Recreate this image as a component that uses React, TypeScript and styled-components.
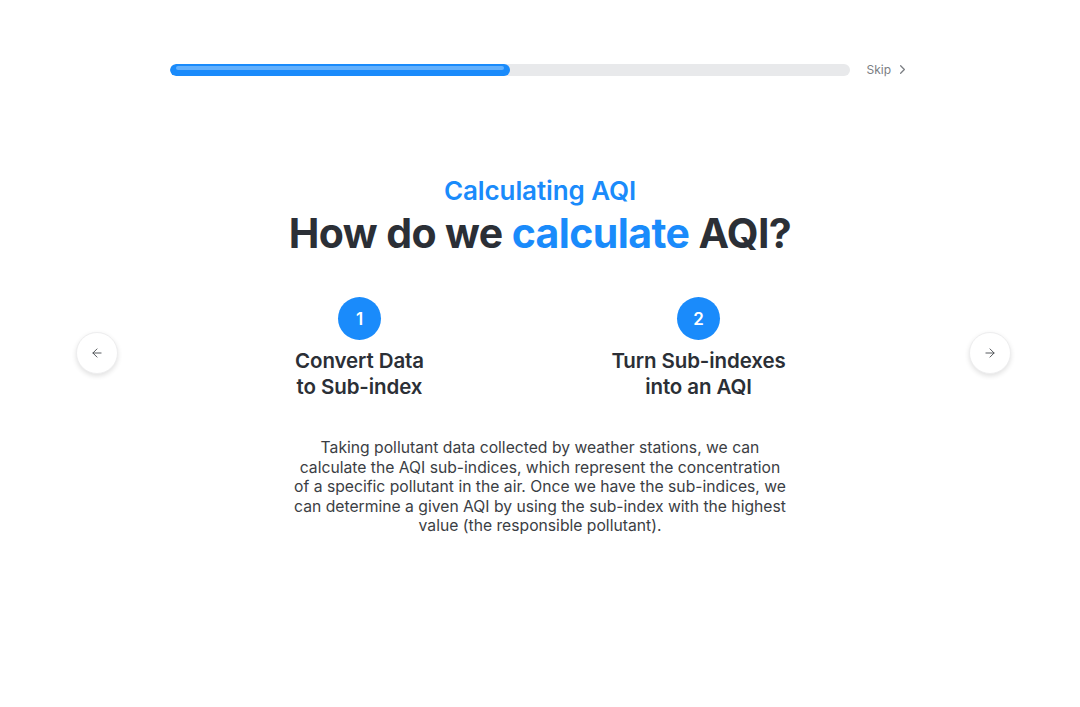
import React from "react";
import styled, { createGlobalStyle } from "styled-components";
import { ArrowLeft, ArrowRight, ChevronRight } from "lucide-react";

const BLUE = "#1a8bfb";
const INK = "#2b2f36";

const GlobalStyle = createGlobalStyle`
  html, body {
    margin: 0;
    padding: 0;
    background: #ffffff;
  }

  body {
    font-family: Inter, "Open Sans", "Liberation Sans", sans-serif;
    color: ${INK};
  }
`;

const Page = styled.main`
  width: 1080px;
  height: 707px;
  display: flex;
  flex-direction: column;
  align-items: center;
  padding-top: 62px;
  box-sizing: border-box;
`;

const TopBar = styled.div`
  width: 740px;
  display: flex;
  align-items: center;
  gap: 16px;
`;

const Track = styled.div`
  flex: 1;
  height: 12px;
  border-radius: 6px;
  background: #e8e9eb;
  overflow: hidden;
`;

const Fill = styled.div`
  position: relative;
  height: 100%;
  border-radius: 6px;
  background: ${BLUE};

  /* glossy strip along the top of the fill */
  &::after {
    content: "";
    position: absolute;
    left: 6px;
    right: 6px;
    top: 2px;
    height: 4px;
    border-radius: 2px;
    background: rgba(255, 255, 255, 0.32);
  }
`;

const SkipButton = styled.button`
  display: flex;
  align-items: center;
  gap: 4px;
  padding: 0;
  border: none;
  background: none;
  font-family: inherit;
  font-size: 12px;
  color: #7b7e83;
  cursor: pointer;
`;

const Intro = styled.header`
  margin-top: 98px;
  display: flex;
  flex-direction: column;
  align-items: center;
`;

const Eyebrow = styled.h2`
  margin: 0;
  font-size: 26px;
  line-height: 32px;
  font-weight: 600;
  color: ${BLUE};
  letter-spacing: -0.1px;
`;

const Heading = styled.h1`
  margin: 1px 0 0;
  font-size: 41px;
  line-height: 50px;
  font-weight: 700;
  letter-spacing: -0.6px;
  color: ${INK};
`;

const Accent = styled.span`
  color: ${BLUE};
`;

const Carousel = styled.section`
  margin-top: 39px;
  width: 100%;
  padding: 0 69px 0 76px;
  box-sizing: border-box;
  display: flex;
  align-items: center;
`;

const NavButton = styled.button`
  flex: none;
  width: 42px;
  height: 42px;
  margin-top: 8px;
  border-radius: 50%;
  border: 1px solid #eeeeef;
  background: #ffffff;
  box-shadow: 0 2px 5px rgba(0, 0, 0, 0.12);
  display: flex;
  align-items: center;
  justify-content: center;
  color: #4a4d52;
  cursor: pointer;
`;

const Steps = styled.div`
  flex: 1;
  display: grid;
  grid-template-columns: 339px 339px;
  justify-content: center;
  padding-right: 29px;
`;

const Step = styled.div`
  display: flex;
  flex-direction: column;
  align-items: center;
`;

const StepNumber = styled.div`
  width: 43px;
  height: 43px;
  border-radius: 50%;
  background: ${BLUE};
  color: #ffffff;
  display: flex;
  align-items: center;
  justify-content: center;
  font-size: 17px;
  font-weight: 600;
`;

const StepTitle = styled.h3`
  margin: 8px 0 0;
  font-size: 20.5px;
  line-height: 26px;
  font-weight: 600;
  text-align: center;
  letter-spacing: -0.1px;
  color: ${INK};
`;

const Description = styled.p`
  margin: 38px 0 0;
  font-size: 15.7px;
  line-height: 19.6px;
  text-align: center;
  color: #3b3e44;
  white-space: nowrap;
`;

const steps = [
  { n: 1, title: ["Convert Data", "to Sub-index"] },
  { n: 2, title: ["Turn Sub-indexes", "into an AQI"] },
];

const lines = [
  "Taking pollutant data collected by weather stations, we can",
  "calculate the AQI sub-indices, which represent the concentration",
  "of a specific pollutant in the air. Once we have the sub-indices, we",
  "can determine a given AQI by using the sub-index with the highest",
  "value (the responsible pollutant).",
];

const progress = 0.5;

const App: React.FC = () => (
  <>
    <GlobalStyle />
    <Page>
      <TopBar>
        <Track>
          <Fill style={{ width: `${progress * 100}%` }} />
        </Track>
        <SkipButton>
          Skip
          <ChevronRight size={15} strokeWidth={2} />
        </SkipButton>
      </TopBar>

      <Intro>
        <Eyebrow>Calculating AQI</Eyebrow>
        <Heading>
          How do we <Accent>calculate</Accent> AQI?
        </Heading>
      </Intro>

      <Carousel>
        <NavButton aria-label="Previous">
          <ArrowLeft size={14} strokeWidth={1.6} />
        </NavButton>
        <Steps>
          {steps.map(s => (
            <Step key={s.n}>
              <StepNumber>{s.n}</StepNumber>
              <StepTitle>
                {s.title[0]}
                <br />
                {s.title[1]}
              </StepTitle>
            </Step>
          ))}
        </Steps>
        <NavButton aria-label="Next">
          <ArrowRight size={14} strokeWidth={1.6} />
        </NavButton>
      </Carousel>

      <Description>
        {lines.map((l, i) => (
          <React.Fragment key={i}>
            {l}
            {i < lines.length - 1 && <br />}
          </React.Fragment>
        ))}
      </Description>
    </Page>
  </>
);

export default App;
